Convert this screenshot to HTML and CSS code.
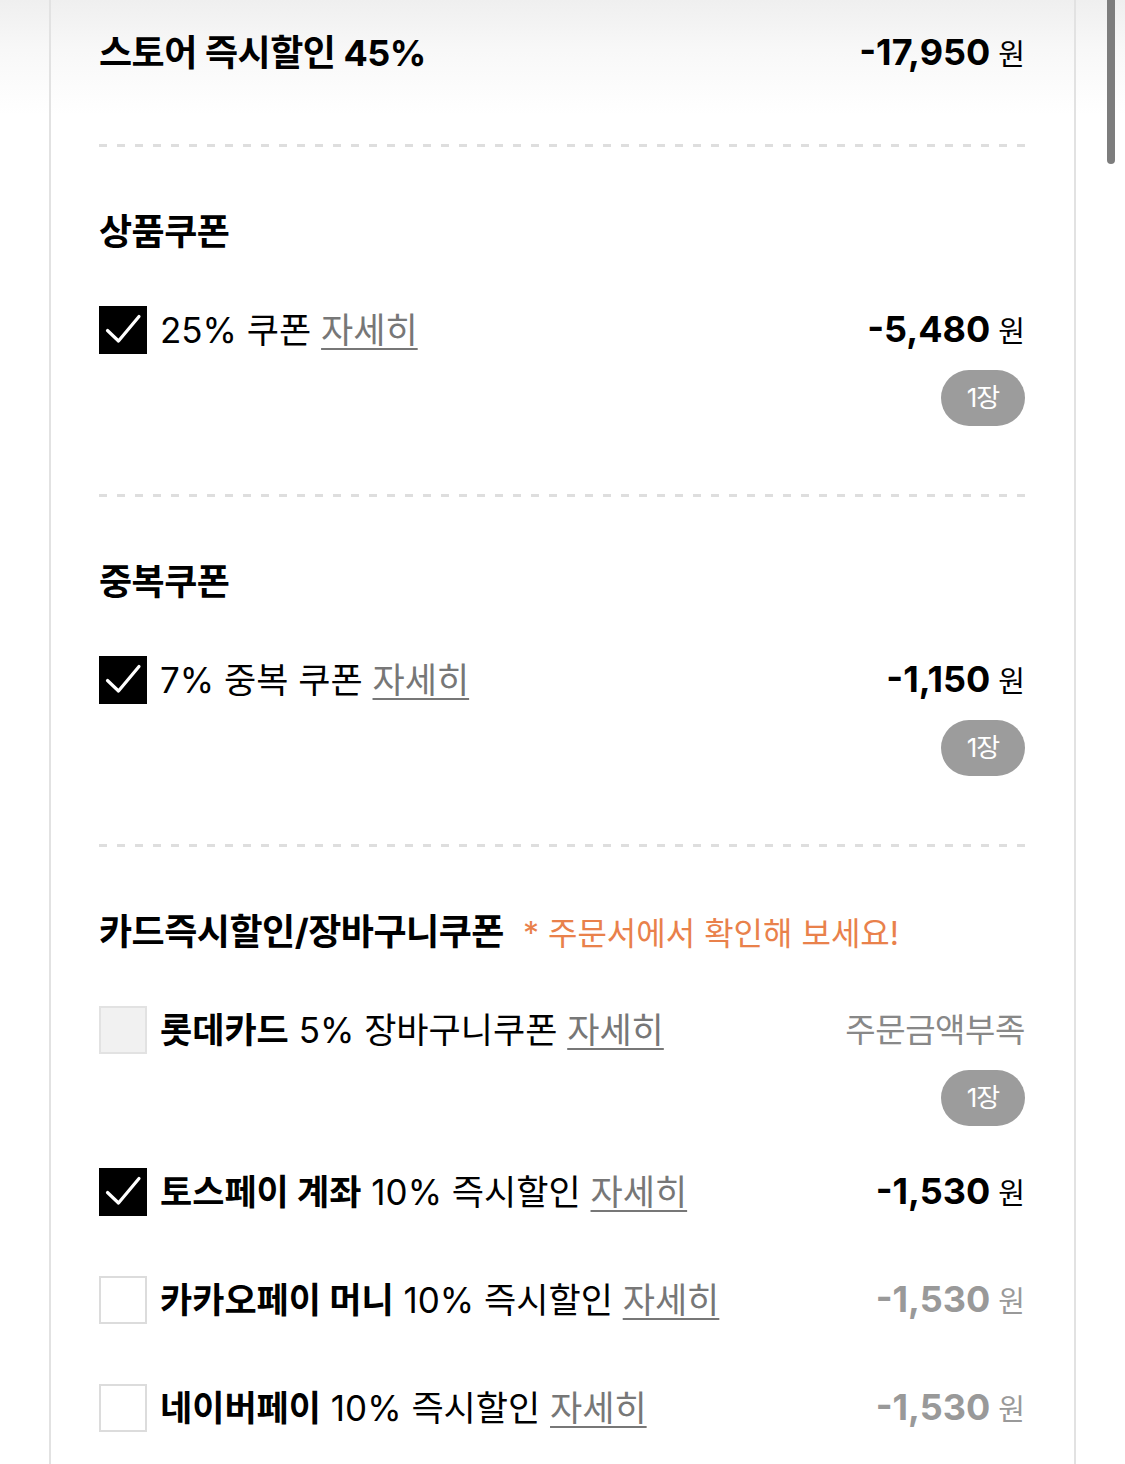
FILE: index.html
```html
<!DOCTYPE html>
<html lang="ko">
<head>
<meta charset="utf-8">
<title>할인 내역</title>
<link rel="stylesheet" href="styles.css">
</head>
<body>
<div class="scrollbar"></div>
<main class="card">
  <section class="sec sec--top">
    <div class="row">
      <div class="label"><span class="title">스토어 즉시할인 45%</span></div>
      <div class="amt"><b class="num">-17,950</b><span class="won">원</span></div>
    </div>
  </section>
  <div class="sep"></div>

  <section class="sec">
    <h2 class="title">상품쿠폰</h2>
    <div class="items">
      <div class="item">
        <div class="row">
          <div class="label">
            <span class="cb cb--on"><svg viewBox="0 0 48 48" width="48" height="48"><path d="M8.5 24.5 L19.5 35 L40 10.5" fill="none" stroke="#fff" stroke-width="3.2" stroke-linecap="round" stroke-linejoin="round"/></svg></span>
            <span class="txt">25% 쿠폰 <a class="more">자세히</a></span>
          </div>
          <div class="amt"><b class="num">-5,480</b><span class="won">원</span></div>
        </div>
        <div class="badge-wrap"><span class="badge">1장</span></div>
      </div>
    </div>
  </section>
  <div class="sep"></div>

  <section class="sec">
    <h2 class="title">중복쿠폰</h2>
    <div class="items">
      <div class="item">
        <div class="row">
          <div class="label">
            <span class="cb cb--on"><svg viewBox="0 0 48 48" width="48" height="48"><path d="M8.5 24.5 L19.5 35 L40 10.5" fill="none" stroke="#fff" stroke-width="3.2" stroke-linecap="round" stroke-linejoin="round"/></svg></span>
            <span class="txt">7% 중복 쿠폰 <a class="more">자세히</a></span>
          </div>
          <div class="amt"><b class="num">-1,150</b><span class="won">원</span></div>
        </div>
        <div class="badge-wrap"><span class="badge">1장</span></div>
      </div>
    </div>
  </section>
  <div class="sep"></div>

  <section class="sec">
    <h2 class="title">카드즉시할인/장바구니쿠폰<span class="note">* 주문서에서 확인해 보세요!</span></h2>
    <div class="items">
      <div class="item">
        <div class="row">
          <div class="label">
            <span class="cb cb--disabled"></span>
            <span class="txt"><b class="brand">롯데카드</b> 5% 장바구니쿠폰 <a class="more">자세히</a></span>
          </div>
          <div class="amt amt--text">주문금액부족</div>
        </div>
        <div class="badge-wrap"><span class="badge">1장</span></div>
      </div>
      <div class="item item--plain">
        <div class="row">
          <div class="label">
            <span class="cb cb--on"><svg viewBox="0 0 48 48" width="48" height="48"><path d="M8.5 24.5 L19.5 35 L40 10.5" fill="none" stroke="#fff" stroke-width="3.2" stroke-linecap="round" stroke-linejoin="round"/></svg></span>
            <span class="txt"><b class="brand">토스페이 계좌</b> 10% 즉시할인 <a class="more">자세히</a></span>
          </div>
          <div class="amt"><b class="num">-1,530</b><span class="won">원</span></div>
        </div>
      </div>
      <div class="item item--plain">
        <div class="row">
          <div class="label">
            <span class="cb"></span>
            <span class="txt"><b class="brand">카카오페이 머니</b> 10% 즉시할인 <a class="more">자세히</a></span>
          </div>
          <div class="amt amt--muted"><b class="num">-1,530</b><span class="won">원</span></div>
        </div>
      </div>
      <div class="item item--plain">
        <div class="row">
          <div class="label">
            <span class="cb"></span>
            <span class="txt"><b class="brand">네이버페이</b> 10% 즉시할인 <a class="more">자세히</a></span>
          </div>
          <div class="amt amt--muted"><b class="num">-1,530</b><span class="won">원</span></div>
        </div>
      </div>
    </div>
  </section>
</main>
</body>
</html>
```

FILE: styles.css
```css
* { box-sizing: border-box; }

html, body { margin: 0; padding: 0; }

body {
  background: #fff linear-gradient(to bottom, #efefef 0, #f8f8f8 50px, #fff 115px) no-repeat;
  font-family: "Inter", "Noto Sans CJK KR", sans-serif;
  color: #000;
  min-height: 1464px;
  overflow: hidden;
}

.scrollbar {
  position: fixed;
  top: 0;
  left: 1107px;
  width: 8px;
  height: 164px;
  background: #7d7d7d;
  border-radius: 0 0 4px 4px;
}

.card {
  margin-left: 49px;
  width: 1027px;
  min-height: 1464px;
  border-left: 2px solid #e2e2e2;
  border-right: 2px solid #e2e2e2;
  padding: 0 49px 0 48px;
}

.sec { padding: 61px 0 68px; }
.sec--top { padding: 29px 0 67px; }

.sep {
  height: 3px;
  background: repeating-linear-gradient(to right, #dedede 0 8px, transparent 8px 18px);
}

.title {
  margin: 0 0 50px;
  height: 48px;
  line-height: 48px;
  font-size: 36px;
  font-weight: 700;
  letter-spacing: -0.5px;
  white-space: nowrap;
}

.sec--top .title { margin: 0; display: block; }

.note {
  margin-left: 19px;
  font-size: 32px;
  font-weight: 400;
  color: #e9814b;
  letter-spacing: 0;
}

.items {
  display: flex;
  flex-direction: column;
  gap: 42px;
}

.item--plain { padding-bottom: 18px; }

.row {
  display: flex;
  align-items: center;
  justify-content: space-between;
  height: 48px;
}

.label {
  display: flex;
  align-items: center;
  gap: 13px;
  white-space: nowrap;
}

.cb {
  flex: none;
  width: 48px;
  height: 48px;
  border: 2px solid #dcdcdc;
  background: #fff;
  display: block;
}

.cb svg { display: block; margin: -2px; }

.cb--on {
  background: #000;
  border-color: #000;
}

.cb--disabled {
  background: #f1f1f1;
  border-color: #e2e2e2;
}

.txt {
  font-size: 35px;
  line-height: 48px;
  letter-spacing: 0;
}

.brand { font-weight: 700; letter-spacing: 0; }

.more {
  color: #777;
  text-decoration: underline;
  text-decoration-thickness: 2px;
  text-underline-offset: 5px;
}

.amt {
  display: flex;
  align-items: baseline;
  gap: 8px;
  white-space: nowrap;
  line-height: 48px;
}

.num {
  font-size: 36px;
  font-weight: 700;
  letter-spacing: 0;
}

.won {
  font-size: 29px;
  font-weight: 400;
}

.amt--muted { color: #999; }

.amt--text {
  font-size: 33px;
  color: #888;
  letter-spacing: -0.4px;
}

.badge-wrap {
  display: flex;
  justify-content: flex-end;
  margin-top: 16px;
}

.badge {
  width: 84px;
  height: 56px;
  border-radius: 28px;
  background: #9c9c9c;
  color: #fff;
  font-size: 26px;
  line-height: 56px;
  text-align: center;
  letter-spacing: -1px;
}
```
